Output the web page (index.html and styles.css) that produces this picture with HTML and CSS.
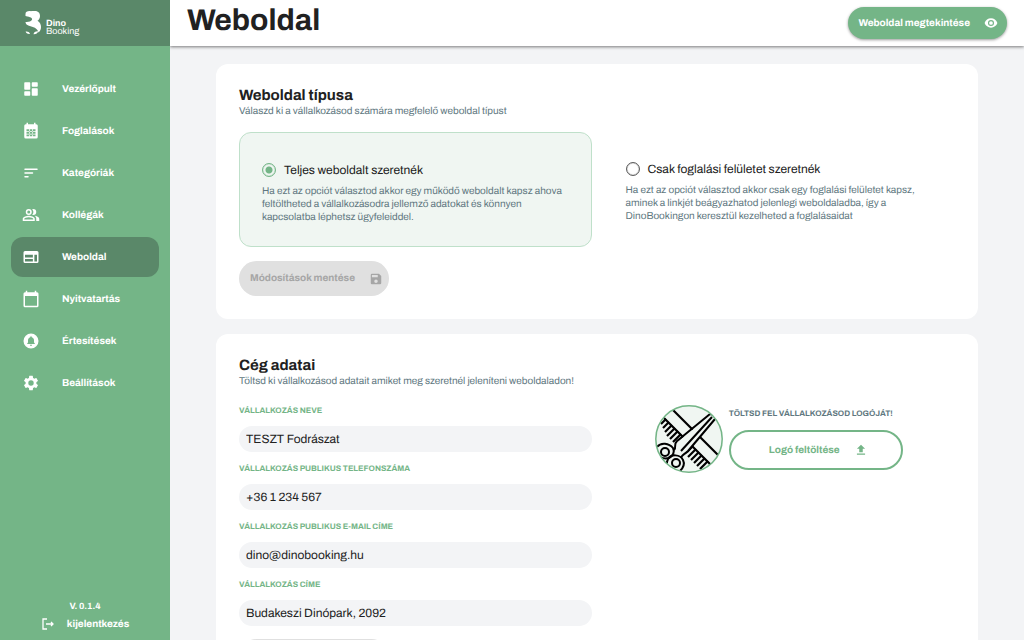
FILE: index.html
```html
<!DOCTYPE html>
<html lang="hu">
<head>
<meta charset="utf-8">
<meta name="viewport" content="width=device-width, initial-scale=1">
<title>Weboldal – Dino Booking</title>
<link rel="stylesheet" href="styles.css">
</head>
<body>
<div class="app">
  <aside class="sidebar">
    <div class="brand">
      <svg class="brand-mark" viewBox="0 0 16 24" aria-hidden="true"><path d="M.5 3C.5.500 3-.2 6 .2 9-.2 15-.8 15 5c0 2-1 3.800-2.500 4.800C15 11.300 16 13.500 16 16c0 2.500-1 4.500-2.500 5.500C12.500 17 8 16 4 14.800 1.500 14 .5 12.500.5 11c3 .3 5.500-.5 6.500-2.200C7.300 7.500 6.500 6.500 5 6.300 3.500 5.500 1.500 5.300.5 5z"/><path d="M.6 20.600c1.800-.3 3.700.2 4.400 2.300-2.400.2-4-.5-4.400-2.300zM8.500 23.200c.3-2 2-3.200 4.700-3-.4 1.900-2.300 3.200-4.700 3z"/></svg>
      <span class="brand-name"><strong>Dino</strong><span>Booking</span></span>
    </div>
    <nav class="menu">
      <a class="menu-item" href="#"><svg class="icon" viewBox="0 0 24 24" aria-hidden="true"><path d="M4 13h6a1 1 0 0 0 1-1V4a1 1 0 0 0-1-1H4a1 1 0 0 0-1 1v8a1 1 0 0 0 1 1zm0 8h6a1 1 0 0 0 1-1v-4a1 1 0 0 0-1-1H4a1 1 0 0 0-1 1v4a1 1 0 0 0 1 1zm10 0h6a1 1 0 0 0 1-1v-8a1 1 0 0 0-1-1h-6a1 1 0 0 0-1 1v8a1 1 0 0 0 1 1zM13 4v4a1 1 0 0 0 1 1h6a1 1 0 0 0 1-1V4a1 1 0 0 0-1-1h-6a1 1 0 0 0-1 1z"/></svg>Vezérlőpult</a>
      <a class="menu-item" href="#"><svg class="icon" viewBox="0 0 24 24" aria-hidden="true"><path fill-rule="evenodd" d="M19 3h-1V1h-2v2H8V1H6v2H5a2 2 0 0 0-2 2v15a2 2 0 0 0 2 2h14a2 2 0 0 0 2-2V5a2 2 0 0 0-2-2zM6 9.500h12V19H6zM9.300 9.500v9.500h1V9.500zM13.700 9.500v9.500h1V9.500zM6 12.200h12v1H6zM6 15.500h12v1H6z"/></svg>Foglalások</a>
      <a class="menu-item" href="#"><svg class="icon" viewBox="0 0 24 24" aria-hidden="true"><path d="M4 18h4a1 1 0 0 0 0-2H4a1 1 0 0 0 0 2zM3 7a1 1 0 0 0 1 1h16a1 1 0 0 0 0-2H4a1 1 0 0 0-1 1zm1 6h10a1 1 0 0 0 0-2H4a1 1 0 0 0 0 2z"/></svg>Kategóriák</a>
      <a class="menu-item" href="#"><svg class="icon" viewBox="0 0 24 24" aria-hidden="true"><path d="M16.670 13.130C18.040 14.060 19 15.320 19 17v3h4v-3c0-2.180-3.570-3.470-6.330-3.870zM15 12a4 4 0 0 0 0-8c-.47 0-.91.1-1.330.24a5.980 5.980 0 0 1 0 7.520c.42.140.86.240 1.330.24zM9 12a4 4 0 1 0 0-8 4 4 0 0 0 0 8zm0-6a2 2 0 1 1 0 4 2 2 0 0 1 0-4zM9 13c-2.670 0-8 1.340-8 4v3h16v-3c0-2.660-5.330-4-8-4zm6 5H3v-1c.2-.71 3.300-2 6-2s5.800 1.290 6 2z"/></svg>Kollégák</a>
      <a class="menu-item active" href="#" aria-current="page"><svg class="icon" viewBox="0 0 24 24" aria-hidden="true"><path fill-rule="evenodd" d="M20 4H4a2 2 0 0 0-2 2v12a2 2 0 0 0 2 2h16a2 2 0 0 0 2-2V6a2 2 0 0 0-2-2zM4 9h10.500v3.500H4zM4 14.500h10.500V18H4zM16.500 9H20v9h-3.500z"/></svg>Weboldal</a>
      <a class="menu-item" href="#"><svg class="icon" viewBox="0 0 24 24" aria-hidden="true"><path fill-rule="evenodd" d="M20 3h-1V1h-2v2H7V1H5v2H4a2 2 0 0 0-2 2v16a2 2 0 0 0 2 2h16a2 2 0 0 0 2-2V5a2 2 0 0 0-2-2zM4 8h16v13H4z"/></svg>Nyitvatartás</a>
      <a class="menu-item" href="#"><svg class="icon" viewBox="0 0 24 24" aria-hidden="true"><path fill-rule="evenodd" d="M12 2a10 10 0 1 0 0 20 10 10 0 0 0 0-20zm0 16.500a1.500 1.500 0 0 1-1.500-1.500h3a1.500 1.500 0 0 1-1.500 1.500zM17 16H7v-1l1-1v-2.600c0-2.100 1-3.800 3-4.300v-.5a1 1 0 0 1 2 0v.5c2 .5 3 2.200 3 4.300V14l1 1z"/></svg>Értesítések</a>
      <a class="menu-item" href="#"><svg class="icon" viewBox="0 0 24 24" aria-hidden="true"><path d="M19.140 12.940c.04-.3.060-.61.060-.94 0-.32-.02-.64-.07-.94l2.030-1.580a.49.49 0 0 0 .12-.61l-1.920-3.320a.49.49 0 0 0-.59-.22l-2.390.96c-.5-.38-1.030-.7-1.620-.94l-.36-2.540a.48.48 0 0 0-.48-.41h-3.840a.47.47 0 0 0-.47.410l-.36 2.540c-.59.240-1.130.570-1.620.940l-2.390-.96a.48.48 0 0 0-.59.220L2.740 8.870a.47.47 0 0 0 .12.610l2.030 1.580c-.05.3-.09.630-.09.940s.02.640.070.940l-2.030 1.580a.49.49 0 0 0-.12.610l1.920 3.320c.12.220.370.290.59.220l2.390-.96c.5.380 1.030.7 1.620.94l.36 2.540c.05.240.240.410.480.410h3.840c.24 0 .44-.17.470-.41l.36-2.540c.59-.24 1.130-.56 1.620-.94l2.390.96c.22.080.470 0 .59-.22l1.920-3.320a.47.47 0 0 0-.12-.61zM12 15.600a3.600 3.600 0 1 1 0-7.200 3.600 3.600 0 0 1 0 7.200z"/></svg>Beállítások</a>
    </nav>
    <div class="sidebar-foot">
      <small class="version">V. 0.1.4</small>
      <a class="logout" href="#"><svg class="logout-icon" viewBox="0 0 14 14" aria-hidden="true"><path d="M6 2H2v10h4M5 7h7M10 5l2 2-2 2"/></svg>kijelentkezés</a>
    </div>
  </aside>

  <div class="page">
    <header class="topbar">
      <h1>Weboldal</h1>
      <button class="btn btn-primary" type="button">Weboldal megtekintése<svg class="btn-icon" viewBox="0 0 24 24" aria-hidden="true"><path d="M12 4C7 4 2.700 7.300 1 12c1.700 4.700 6 8 11 8s9.300-3.300 11-8c-1.700-4.700-6-8-11-8zm0 13.200a5.200 5.200 0 1 1 0-10.400 5.200 5.200 0 0 1 0 10.400zm0-2a3.200 3.200 0 1 0 0-6.400 3.200 3.200 0 0 0 0 6.400z"/></svg></button>
    </header>

    <main class="content">
      <form class="card">
        <h2>Weboldal típusa</h2>
        <p class="lead">Válaszd ki a vállalkozásod számára megfelelő weboldal típust</p>
        <div class="columns options">
          <div class="option selected">
            <label><input type="radio" name="type" checked>Teljes weboldalt szeretnék</label>
            <p>Ha ezt az opciót választod akkor egy működő weboldalt kapsz ahova feltöltheted a vállalkozásodra jellemző adatokat és könnyen kapcsolatba léphetsz ügyfeleiddel.</p>
          </div>
          <div class="option">
            <label><input type="radio" name="type">Csak foglalási felületet szeretnék</label>
            <p>Ha ezt az opciót választod akkor csak egy foglalási felületet kapsz, aminek a linkjét beágyazhatod jelenlegi weboldaladba, így a DinoBookingon keresztül kezelheted a foglalásaidat</p>
          </div>
        </div>
        <button class="btn btn-save" type="submit" disabled>Módosítások mentése<svg class="btn-icon" viewBox="0 0 24 24" aria-hidden="true"><path d="M17 3H5a2 2 0 0 0-2 2v14a2 2 0 0 0 2 2h14a2 2 0 0 0 2-2V7zm-5 16a3 3 0 1 1 0-6 3 3 0 0 1 0 6zm3-10H5V5h10z"/></svg></button>
      </form>

      <form class="card">
        <h2>Cég adatai</h2>
        <p class="lead">Töltsd ki vállalkozásod adatait amiket meg szeretnél jeleníteni weboldaladon!</p>
        <div class="columns details">
          <div class="fields">
            <label for="name">VÁLLALKOZÁS NEVE</label>
            <input id="name" type="text" value="TESZT Fodrászat">
            <label for="phone">VÁLLALKOZÁS PUBLIKUS TELEFONSZÁMA</label>
            <input id="phone" type="tel" value="+36 1 234 567">
            <label for="email">VÁLLALKOZÁS PUBLIKUS E-MAIL CÍME</label>
            <input id="email" type="email" value="dino@dinobooking.hu">
            <label for="address">VÁLLALKOZÁS CÍME</label>
            <input id="address" type="text" value="Budakeszi Dinópark, 2092">
            <button class="btn btn-save" type="submit" disabled>Módosítások mentése<svg class="btn-icon" viewBox="0 0 24 24" aria-hidden="true"><path d="M17 3H5a2 2 0 0 0-2 2v14a2 2 0 0 0 2 2h14a2 2 0 0 0 2-2V7zm-5 16a3 3 0 1 1 0-6 3 3 0 0 1 0 6zm3-10H5V5h10z"/></svg></button>
          </div>
          <div class="upload">
            <svg class="logo" viewBox="0 0 68 68" role="img" aria-label="Olló és fésű">
              <defs><clipPath id="disc"><circle cx="34" cy="34" r="33"/></clipPath></defs>
              <circle cx="34" cy="34" r="34" fill="#f0f6f2"/>
              <g clip-path="url(#disc)" fill="none" stroke="#000">
                <g stroke-width="2.200">
                  <path d="M17 4l49 49M7 11l50 50"/>
                  <path d="M11 14l-5 5M14 17l-6 6M17 20l-7 7M20 23l-8 8M23 26l-8 8M26 29l-8 8M29 32l-8 8M32 35l-8 8M35 38l-6 6M38 41l-6 6M41 44l-8 8M44 47l-8 8M47 50l-8 8M50 53l-8 8M53 56l-8 8M56 59l-8 8"/>
                </g>
                <path d="M57 9L21 38l0 12 6 3L60 14z" fill="#f0f6f2" stroke="none"/>
                <g stroke-width="2" stroke-linejoin="round">
                  <path d="M55 9L22 36c-4 4 0 6-3 9M57 12L26 46M60 14L33 46c-4 4-6 3-7 7M55 9l5 1v4"/>
                  <circle cx="10" cy="47" r="4"/>
                  <path d="M2 42c4-5 12-4 16 1 2 4 0 8-4 10-4 1-9 0-12-4"/>
                  <circle cx="21" cy="58" r="4"/>
                  <path d="M13 54c3-5 12-5 15 1 2 4 0 8-3 11M13 54c-2 4-1 8 2 11"/>
                </g>
              </g>
              <circle cx="34" cy="34" r="33.200" fill="none" stroke="#74b587" stroke-width="1.500"/>
            </svg>
            <div class="upload-side">
              <p class="upload-title">TÖLTSD FEL VÁLLALKOZÁSOD LOGÓJÁT!</p>
              <button class="btn btn-outline" type="button">Logó feltöltése<svg class="btn-icon" viewBox="0 0 24 24" aria-hidden="true"><path d="M9 16h6v-6h4l-7-7-7 7h4zM5 18h14v2H5z"/></svg></button>
            </div>
          </div>
        </div>
      </form>
    </main>
  </div>
</div>
</body>
</html>
```
FILE: styles.css
```css
:root {
  --green: #74b587;
  --green-dark: #5a8869;
  --ink: #212121;
  --muted: #607780;
  --surface: #f3f4f6;
}
* { box-sizing: border-box; }
body {
  margin: 0;
  font: 10px/13px Archivo, "Liberation Sans", Arial, sans-serif;
  text-rendering: geometricPrecision;
  color: var(--ink);
  background: var(--surface);
}
h1, h2, p { margin: 0; }
a { color: inherit; text-decoration: none; }
button, input { font: inherit; color: inherit; text-rendering: inherit; }

.app { display: flex; height: 100vh; overflow: hidden; }

.sidebar {
  display: flex;
  flex-direction: column;
  flex: none;
  width: 170px;
  color: #fff;
  background: var(--green);
}
.brand {
  display: flex;
  align-items: center;
  gap: 5px;
  height: 46px;
  padding-left: 25px;
  background: var(--green-dark);
}
.brand-mark { width: 16px; height: 24px; fill: currentColor; }
.brand-name { display: grid; padding-top: 8px; font-size: 9px; line-height: 8px; }
.menu { display: grid; gap: 2px; padding: 23px 11px; }
.menu-item {
  display: flex;
  align-items: center;
  gap: 22px;
  height: 40px;
  padding-left: 11px;
  border-radius: 12px;
  font-weight: bold;
}
.menu-item.active { background: var(--green-dark); }
.icon { width: 18px; height: 18px; fill: currentColor; }
.sidebar-foot {
  display: grid;
  justify-items: center;
  gap: 4px;
  margin-top: auto;
  padding-bottom: 9px;
  font-weight: bold;
}
.version { font-size: 9px; }
.logout { display: flex; align-items: center; gap: 12px; }
.logout-icon { width: 14px; height: 14px; fill: none; stroke: currentColor; stroke-width: 1.3; }

.page { display: flex; flex-direction: column; flex: 1; min-width: 0; }
.topbar {
  z-index: 1;
  display: flex;
  justify-content: space-between;
  align-items: center;
  flex: none;
  height: 46px;
  padding: 0 17px;
  background: #fff;
  box-shadow: 0 1px 3px rgba(0, 0, 0, .5);
  clip-path: inset(0 0 -6px 0);
}
h1 { padding-bottom: 4px; font-size: 30px; line-height: 34px; }

.btn {
  display: inline-flex;
  align-items: center;
  justify-content: center;
  gap: 14px;
  padding: 0 6px 0 11px;
  border: 0;
  border-radius: 20px;
  font-weight: bold;
}
.btn-icon { width: 14px; height: 14px; fill: currentColor; }
.btn-primary {
  height: 32px;
  padding-right: 9px;
  color: #fff;
  background: var(--green);
  box-shadow: 0 1px 3px rgba(0, 0, 0, .4);
}
.btn-save { height: 35px; color: #a6a6a6; background: #e0e0e0; }
.btn-outline {
  width: 100%;
  height: 40px;
  color: var(--green);
  background: #fff;
  border: 2px solid var(--green);
}

.content {
  display: grid;
  align-content: start;
  gap: 15px;
  flex: 1;
  min-height: 0;
  padding: 18px 46px;
  overflow: hidden;
}
.card { padding: 24px 23px 23px; border-radius: 12px; background: #fff; }
h2 { font-size: 15px; line-height: 17px; }
.lead { color: var(--muted); }
.columns { display: grid; grid-template-columns: 1fr 1fr; gap: 11px; }
.options { margin: 14px 0; }
.option { padding: 28px 23px 22px; border-radius: 12px; }
.option.selected { border: 1px solid #bfe0ca; background: #f0f6f2; padding-inline: 22px; }
.option label { display: flex; align-items: center; gap: 8px; min-height: 18px; font-size: 12px; }
.option p { margin-top: 6px; color: var(--muted); }
input[type="radio"] {
  appearance: none;
  width: 14px;
  height: 14px;
  margin: 0;
  border: 1px solid #5c5c5c;
  border-radius: 50%;
  box-shadow: inset 0 0 1px #5c5c5c;
}
input[type="radio"]:checked {
  border-color: var(--green);
  box-shadow: inset 0 0 1px var(--green);
  background: radial-gradient(circle, var(--green) 3px, transparent 4px);
}

.details { padding-top: 16px; }
.fields { display: grid; justify-items: start; }
.fields label { font-size: 8px; font-weight: bold; color: var(--green); }
.fields input {
  width: 100%;
  height: 26px;
  margin: 9px 0;
  padding: 0 7px;
  border: 0;
  border-radius: 13px;
  font-size: 12px;
  background: var(--surface);
}
.fields input + label { margin-top: 1px; }
.fields .btn { margin-top: 4px; }
.upload { display: flex; align-items: flex-start; justify-content: center; gap: 6px; }
.logo { width: 68px; height: 68px; margin-top: 1px; }
.upload-side { display: grid; gap: 10px; min-width: 174px; padding-top: 3px; }
.upload-title { font-size: 8px; font-weight: bold; color: var(--muted); }
```
